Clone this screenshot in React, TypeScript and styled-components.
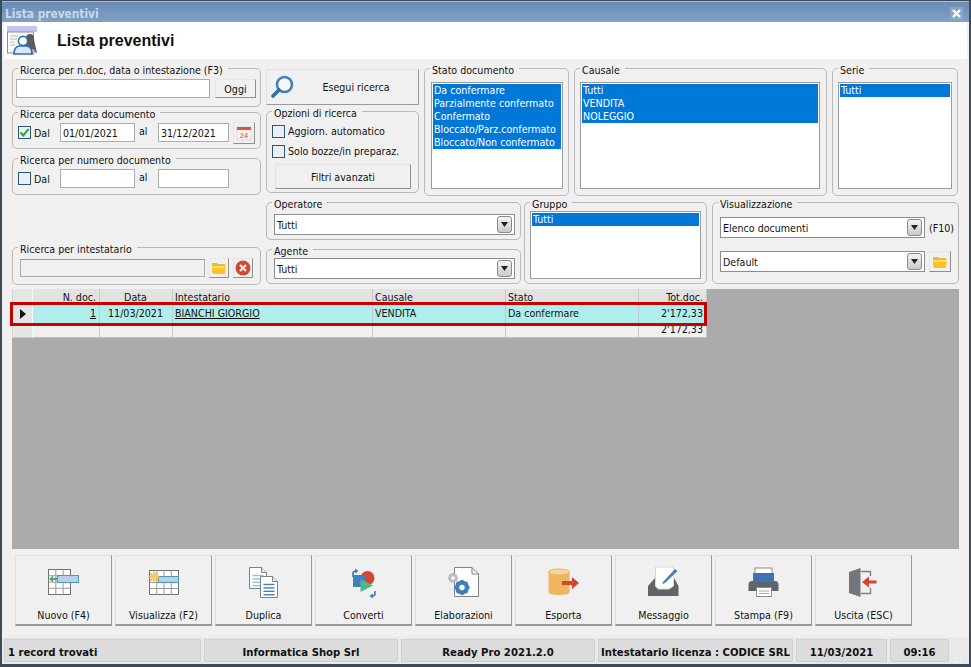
import { createGlobalStyle, styled } from 'styled-components';

const UI_FONT = '"DejaVu Sans Condensed", "DejaVu Sans", sans-serif';

const GlobalStyle = createGlobalStyle`
  html, body {
    margin: 0;
    padding: 0;
    background: #f0f0f0;
    overflow: hidden;
  }
  * {
    box-sizing: border-box;
  }
`;

const Win = styled.div`
  width: 971px;
  height: 667px;
  display: flex;
  flex-direction: column;
  background: #f0f0f0;
  border: 1px solid #3f4a58;
  border-width: 1px 2px 3px 2px;
  font-family: ${UI_FONT};
  font-stretch: condensed;
  font-size: 10.6px;
  line-height: 14px;
  color: #111;
`;

const TitleBar = styled.div`
  height: 21px;
  padding: 3px 3px 0 3px;
  flex: none;
  display: flex;
  align-items: center;
  justify-content: space-between;
  background: linear-gradient(#6a8cb5, #80a0c6);
  border-top: 1px solid #a9bdd6;
  color: #cdd8e6;
  font-weight: bold;
  font-size: 11.8px;
`;

const CloseBox = styled.div`
  width: 13px;
  height: 13px;
  margin-right: 3px;
  display: flex;
  align-items: center;
  justify-content: center;
  background: #8aa6c8;
`;

const Banner = styled.div`
  height: 37px;
  flex: none;
  margin: 0 2px 0 2px;
  padding-left: 3px;
  background: #fff;
  display: flex;
  align-items: center;
  gap: 20px;
`;

const BannerTitle = styled.div`
  font-family: "Liberation Sans", Arial, sans-serif;
  font-stretch: normal;
  font-weight: bold;
  font-size: 16px;
`;

const Form = styled.div`
  flex: none;
  height: 230px;
  padding: 9px 0 0 10px;
  display: flex;
  gap: 5px;
`;

const LeftColumn = styled.div`
  width: 249px;
  display: flex;
  flex-direction: column;
`;

const RightColumn = styled.div`
  display: flex;
  flex-direction: column;
  gap: 6px;
`;

const FilterRow = styled.div<{ $gap: number }>`
  display: flex;
  gap: ${p => p.$gap}px;
`;

const Stack = styled.div<{ $width: number; $gap: number }>`
  width: ${p => p.$width}px;
  display: flex;
  flex-direction: column;
  gap: ${p => p.$gap}px;
`;

const Group = styled.div<{ $w?: number; $h: number; $top?: number; $left?: number; $pad?: string; $col?: boolean; $gap?: number }>`
  position: relative;
  flex: none;
  width: ${p => (p.$w ? `${p.$w}px` : '100%')};
  height: ${p => p.$h}px;
  margin-top: ${p => p.$top ?? 0}px;
  margin-left: ${p => p.$left ?? 0}px;
  padding: ${p => p.$pad ?? '0'};
  border: 1px solid #b9b9b9;
  border-radius: 5px;
  display: flex;
  flex-direction: ${p => (p.$col ? 'column' : 'row')};
  align-items: ${p => (p.$col ? 'stretch' : 'center')};
  gap: ${p => p.$gap ?? 0}px;
`;

const Legend = styled.span`
  position: absolute;
  top: -6px;
  left: 5px;
  padding: 0 5px 0 2px;
  background: #f0f0f0;
  white-space: nowrap;
`;

const Field = styled.div<{ $w: number; $h?: number; $off?: boolean }>`
  width: ${p => p.$w}px;
  height: ${p => p.$h ?? 19}px;
  flex: none;
  padding: 0 2px;
  background: ${p => (p.$off ? '#f0f0f0' : '#fff')};
  border: 1px solid #acacac;
  border-top-color: ${p => (p.$off ? '#9a9a9a' : '#acacac')};
  line-height: 18px;
`;

const SmallButton = styled.div<{ $w: number; $h?: number; $left?: number }>`
  width: ${p => p.$w}px;
  height: ${p => p.$h ?? 19}px;
  margin-left: ${p => p.$left ?? 0}px;
  flex: none;
  display: flex;
  align-items: center;
  justify-content: center;
  background: #f0f0f0;
  border: 1px solid #e6e6e6;
  border-right-color: #8f8f8f;
  border-bottom-color: #8f8f8f;
`;

const Check = styled.div`
  width: 13px;
  height: 13px;
  flex: none;
  display: flex;
  align-items: center;
  justify-content: center;
  background: #eceff2;
  border: 1px solid #2c5878;
`;

const CheckLabel = styled.label<{ $w?: number }>`
  display: flex;
  align-items: center;
  gap: 3px;
  width: ${p => (p.$w ? `${p.$w}px` : 'auto')};
  flex: none;
  white-space: nowrap;
`;

const Between = styled.span<{ $w: number }>`
  width: ${p => p.$w}px;
  flex: none;
  padding-left: 4px;
  margin-top: -3px;
`;

const SearchButton = styled.div`
  height: 36px;
  width: 153px;
  margin-top: 1px;
  padding-left: 3px;
  display: flex;
  align-items: center;
  background: #f0f0f0;
  border: 1px solid #e2e2e2;
  border-right-color: #9a9a9a;
  border-bottom-color: #9a9a9a;
`;

const SearchCaption = styled.span`
  flex: 1;
  text-align: center;
`;

const WideButton = styled.div`
  height: 25px;
  margin: 0 1px 0 3px;
  display: flex;
  align-items: center;
  justify-content: center;
  border: 1px solid #e2e2e2;
  border-right-color: #8f8f8f;
  border-bottom-color: #8f8f8f;
`;

const ListBox = styled.div<{ $h: number }>`
  height: ${p => p.$h}px;
  width: 100%;
  padding: 1px;
  background: #fff;
  border: 1px solid #9c9c9c;
  overflow: hidden;
`;

const ListItem = styled.div`
  height: 13px;
  padding-left: 1px;
  line-height: 13px;
  background: #0078d7;
  color: #fff;
  white-space: nowrap;
`;

const Select = styled.div<{ $w: number }>`
  width: ${p => p.$w}px;
  height: 21px;
  flex: none;
  padding: 0 2px 0 2px;
  display: flex;
  align-items: center;
  justify-content: space-between;
  background: #fff;
  border: 1px solid #8d8d8d;
`;

const SelectArrow = styled.div`
  width: 15px;
  height: 17px;
  display: flex;
  align-items: center;
  justify-content: center;
  background: linear-gradient(#f4f4f4, #c9c9c9);
  border: 1px solid #8a8a8a;
  border-radius: 3px;
`;

const ViewRow = styled.div`
  display: flex;
  align-items: center;
  gap: 4px;
`;

const Grid = styled.div`
  position: relative;
  flex: none;
  height: 260px;
  margin: 0 10px;
  background: #ababab;
`;

const Table = styled.div`
  width: 694px;
  display: grid;
  grid-template-columns: 20px 67px 73px 200px 133px 133px 68px;
  background: #f0f0f0;
  border-left: 1px solid #d5d5d5;
`;

const Cell = styled.div<{ $kind: 'head' | 'sel' | 'sum'; $right?: boolean; $center?: boolean }>`
  height: ${p => (p.$kind === 'head' ? 15 : p.$kind === 'sel' ? 21 : 13)}px;
  padding: 0 3px 0 2px;
  text-align: ${p => (p.$right ? 'right' : p.$center ? 'center' : 'left')};
  line-height: ${p => (p.$kind === 'head' ? 16 : p.$kind === 'sel' ? 18 : 9)}px;
  white-space: nowrap;
  background: ${p => (p.$kind === 'head' ? '#e2e2e2' : p.$kind === 'sel' ? '#b0eeee' : '#f0f0f0')};
  border-right: 1px solid #c8c8c8;
  border-bottom: 1px solid ${p => (p.$kind === 'sum' ? '#c0c0c0' : 'transparent')};
`;

const RowHead = styled.div<{ $h: number }>`
  height: ${p => p.$h}px;
  display: flex;
  align-items: center;
  justify-content: center;
  background: #e6e6e6;
  border-right: 1px solid #fafafa;
  border-bottom: 1px solid #c8c8c8;
`;

const Linked = styled.span`
  text-decoration: underline;
`;

// red marker drawn over the selected row
const RowMark = styled.div`
  position: absolute;
  top: 13px;
  left: -2px;
  width: 697px;
  height: 24px;
  border: 3px solid #c80000;
  pointer-events: none;
`;

const Toolbar = styled.div`
  flex: none;
  margin-top: 6px;
  padding-left: 13px;
  display: flex;
  gap: 3px;
`;

const ToolButton = styled.div`
  width: 97px;
  height: 71px;
  padding-top: 10px;
  display: flex;
  flex-direction: column;
  align-items: center;
  justify-content: space-between;
  padding-bottom: 2px;
  background: #f0f0f0;
  border: 1px solid #e0e0e0;
  border-right-color: #9a9a9a;
  border-bottom: 2px solid #9a9a9a;
`;

const StatusBar = styled.div`
  flex: none;
  height: 27px;
  margin-top: auto;
  padding: 2px;
  display: flex;
  gap: 3px;
  background: #e9e9e9;
  font-family: "DejaVu Sans", sans-serif;
  font-stretch: normal;
  font-weight: bold;
  font-size: 10.1px;
`;

const StatusCell = styled.div<{ $w: number; $left?: boolean }>`
  width: ${p => p.$w}px;
  flex: none;
  padding: 4px 0 0 ${p => (p.$left ? 3 : 0)}px;
  display: flex;
  align-items: center;
  justify-content: ${p => (p.$left ? 'flex-start' : 'center')};
  background: #dcdcdc;
  border: 1px solid #d0d0d0;
  white-space: nowrap;
`;

const Grip = styled.svg`
  align-self: flex-end;
  margin-left: 2px;
`;

const FolderIcon = () => (
  <svg width="16" height="14" viewBox="0 0 16 14">
    <path d="M1 3 L1 2 L6 2 L7 3 L14 3 L14 5 L1 5Z" fill="#e8b93e" />
    <path d="M1 5 L15 4.5 L14 12 Q14 13 13 13 L3 13 Q1.5 13 1 11Z" fill="#fbc520" />
    <path d="M1.5 5.5 L14.5 5 L14.3 6.5 L1.5 7Z" fill="#fde58a" />
  </svg>
);

const ClearIcon = () => (
  <svg width="16" height="16" viewBox="0 0 16 16">
    <circle cx="8" cy="8" r="7.5" fill="#cf4a36" />
    <path d="M5 5 L11 11 M11 5 L5 11" stroke="#f6e3df" strokeWidth="2.2" />
  </svg>
);

const CalendarIcon = () => (
  <svg width="16" height="16" viewBox="0 0 16 16">
    <rect x="1" y="2" width="14" height="13" fill="#fdf3f1" stroke="#d8d8d8" />
    <path d="M1 2 H15 V5 H1Z" fill="#d9563f" />
    <text x="8" y="13" textAnchor="middle" fontSize="7.5" fontWeight="bold" fill="#e27a68" fontFamily="Liberation Sans, sans-serif">24</text>
  </svg>
);

const Tick = () => (
  <svg width="11" height="11" viewBox="0 0 11 11">
    <path d="M1.5 5.5 L4.3 8.5 L9.5 2" fill="none" stroke="#1ea52c" strokeWidth="2" />
  </svg>
);

const Arrow = () => (
  <svg width="7" height="5" viewBox="0 0 7 5">
    <path d="M0 0 H7 L3.5 5Z" fill="#222" />
  </svg>
);

const Lens = () => (
  <svg width="24" height="24" viewBox="0 0 24 24">
    <circle cx="14.5" cy="9.5" r="7.5" fill="#f4f9fd" stroke="#3f7fbd" strokeWidth="2.6" />
    <path d="M9 15 L3 21" stroke="#2f6fae" strokeWidth="3.6" strokeLinecap="round" />
  </svg>
);

const BannerIcon = () => (
  <svg width="30" height="30" viewBox="0 0 30 30">
    <rect x="0" y="0" width="30" height="6" fill="#c6c2f2" />
    <rect x="0.5" y="6" width="26" height="21" fill="#fafafa" stroke="#8c8c8c" />
    <path d="M3 10 H11 M3 13 H10 M3 16 H8 M3 19 H8" stroke="#b5b5b5" strokeWidth="1.2" />
    <circle cx="23" cy="12" r="4" fill="#5c5c5c" />
    <path d="M19 12 Q18 20 16 22 L30 27 L28 18 Q27 14 27 12Z" fill="#5c5c5c" />
    <circle cx="25" cy="26" r="3" fill="#b9b9b9" />
    <circle cx="16" cy="15" r="4.6" fill="#fff" stroke="#2f6fb3" strokeWidth="1.6" />
    <path d="M7 28 Q7 21 12 20 L20 20 Q25 21 25 28Z" fill="#d8e8f7" stroke="#2f6fb3" strokeWidth="1.6" />
  </svg>
);

const Sheet = ({ x, y, w = 22, h = 25, cols = 3 }: { x: number; y: number; w?: number; h?: number; cols?: number }) => {
  const lines = [];
  for (let i = 1; i < cols; i++) lines.push(<path key={i} d={`M${x + (w * i) / cols} ${y} V${y + h}`} stroke="#9a9a9a" />);
  for (let i = 1; i < 4; i++) lines.push(<path key={`r${i}`} d={`M${x} ${y + (h * i) / 4} H${x + w}`} stroke="#9a9a9a" />);
  return (
    <g>
      <rect x={x} y={y} width={w} height={h} fill="#fff" stroke="#707070" />
      {lines}
    </g>
  );
};

const Gear = ({ cx, cy, r, color }: { cx: number; cy: number; r: number; color: string }) => (
  <g>
    <circle cx={cx} cy={cy} r={r * 0.68} fill="none" stroke={color} strokeWidth={r * 0.5} />
    {[0, 45, 90, 135].map(a => (
      <rect
        key={a}
        x={cx - r * 0.2}
        y={cy - r}
        width={r * 0.4}
        height={r * 2}
        fill={color}
        transform={`rotate(${a} ${cx} ${cy})`}
      />
    ))}
    <circle cx={cx} cy={cy} r={r * 0.36} fill="#fff" />
  </g>
);

const Doc = ({ x, y, w, h, fold, lines }: { x: number; y: number; w: number; h: number; fold: number; lines: string }) => (
  <g>
    <path
      d={`M${x} ${y} H${x + w - fold} L${x + w} ${y + fold} V${y + h} H${x}Z`}
      fill="#fff"
      stroke="#808080"
    />
    <path d={`M${x + w - fold} ${y} V${y + fold} H${x + w}`} fill="#eee" stroke="#808080" />
    {[0, 1, 2, 3].map(i => (
      <path key={i} d={`M${x + 3} ${y + 8 + i * 3.4} H${x + w - 3}`} stroke={lines} strokeWidth="1.4" />
    ))}
  </g>
);

const icons: Record<string, React.ReactNode> = {
  nuovo: (
    <>
      <Sheet x={4.5} y={3.5} />
      <rect x={13.5} y={9.5} width={21} height={7} fill="#b9cfe8" stroke="#4d9ab5" />
      <path d="M5 13 L9 9.5 V12 H13 V14 H9 V16.5Z" fill="#4fa57e" />
    </>
  ),
  visualizza: (
    <>
      <Sheet x={5.5} y={4.5} w={29} h={24} cols={4} />
      <rect x={14.5} y={10.5} width={20} height={6} fill="#b9cfe8" stroke="#4d9ab5" />
      {[0, 45, 90, 135].map(a => (
        <rect key={a} x={9.2} y={5.5} width={1.6} height={11} fill="#f2b64a" transform={`rotate(${a} 10 11)`} />
      ))}
      <circle cx={10} cy={11} r={3} fill="#f6c86a" />
    </>
  ),
  duplica: (
    <>
      <Doc x={5.5} y={1.5} w={17} h={21} fold={5} lines="#8fc0e8" />
      <Doc x={16.5} y={10.5} w={17} h={21} fold={5} lines="#3f7fbd" />
    </>
  ),
  converti: (
    <>
      <circle cx={23.5} cy={12} r={7} fill="#d4472f" />
      <rect x={9} y={9} width={12.5} height={12} fill="#3f7fbd" />
      <path d="M16.5 13 L29 19.5 L16.5 26Z" fill="#4fb58c" />
      <path d="M9 11 V7 Q9 5 12 5" fill="none" stroke="#3f7fbd" strokeWidth="1.6" />
      <path d="M11 2.5 L14.5 5 L11 7.5Z" fill="#3f7fbd" />
      <path d="M31 25 V28 Q31 30 28 30" fill="none" stroke="#3f7fbd" strokeWidth="1.6" />
      <path d="M29 27.5 L25.5 30 L29 32.5Z" fill="#3f7fbd" />
    </>
  ),
  elaborazioni: (
    <>
      <path d="M10.5 1.5 H28 L34.5 8 V30.5 H10.5Z" fill="#fff" stroke="#808080" />
      <path d="M28 1.5 V8 H34.5" fill="none" stroke="#808080" />
      <Gear cx={9} cy={12} r={5} color="#bdbdbd" />
      <Gear cx={18} cy={21.5} r={7.5} color="#3f7fbd" />
    </>
  ),
  esporta: (
    <>
      <path d="M4.5 6 V26 Q4.5 29 15 29 Q25.5 29 25.5 26 V6Z" fill="#efb65f" />
      <ellipse cx={15} cy={6} rx={10.5} ry={3} fill="#f6d49c" stroke="#efb65f" />
      <path d="M18 15 H28 V11 L35 17 L28 23 V19 H18Z" fill="#d4472f" />
    </>
  ),
  messaggio: (
    <>
      <path d="M4 30 V20 L11 12 H30 L34.5 20 V30Z" fill="#5f6468" />
      <path d="M11.5 1 H29.5 V20 L25 23 H14 L11.5 20Z" fill="#fff" stroke="#d8d8d8" />
      <path d="M19 16 L31 3 L33.5 5 L21 17 L18 18Z" fill="#3f7fbd" />
    </>
  ),
  stampa: (
    <>
      <rect x={11} y={2} width={17} height={6} fill="#fff" stroke="#8c8c8c" />
      <path d="M4.5 19 Q4.5 15 8 15 H31 Q34.5 15 34.5 19 V25 H4.5Z" fill="#5f6468" />
      <rect x={9} y={7} width={21} height={9} fill="#3f74b3" />
      <rect x={12.5} y={21.5} width={15} height={9} fill="#fff" stroke="#8c8c8c" />
      <path d="M15 25 H25 M15 27.5 H25" stroke="#a8a8a8" />
    </>
  ),
  uscita: (
    <>
      <path d="M17 5.5 H26.5 V10 M26.5 22 V27.5 H17" fill="none" stroke="#808080" strokeWidth="1.4" />
      <path d="M5 6 L16.5 2 V31 L5 27Z" fill="#72777b" />
      <path d="M18 16 L25 10.5 V14.5 H32.5 V17.5 H25 V21.5Z" fill="#d4472f" />
    </>
  ),
};

const tools = [
  { id: 'nuovo', label: 'Nuovo (F4)' },
  { id: 'visualizza', label: 'Visualizza (F2)' },
  { id: 'duplica', label: 'Duplica' },
  { id: 'converti', label: 'Converti' },
  { id: 'elaborazioni', label: 'Elaborazioni' },
  { id: 'esporta', label: 'Esporta' },
  { id: 'messaggio', label: 'Messaggio' },
  { id: 'stampa', label: 'Stampa (F9)' },
  { id: 'uscita', label: 'Uscita (ESC)' },
];

const statusCells = [
  { text: '1 record trovati', w: 197, left: true },
  { text: 'Informatica Shop Srl', w: 194 },
  { text: 'Ready Pro 2021.2.0', w: 194 },
  { text: 'Intestatario licenza : CODICE SRL', w: 195 },
  { text: '11/03/2021', w: 91 },
  { text: '09:16', w: 59 },
];

const App = () => {
  return (
    <Win>
      <GlobalStyle />
      <TitleBar>
        Lista preventivi
        <CloseBox>
          <svg width="9" height="9" viewBox="0 0 9 9">
            <path d="M1 1 L8 8 M8 1 L1 8" stroke="#fff" strokeWidth="2.4" />
          </svg>
        </CloseBox>
      </TitleBar>
      <Banner>
        <BannerIcon />
        <BannerTitle>Lista preventivi</BannerTitle>
      </Banner>

      <Form>
        <LeftColumn>
          <Group $h={39} $pad="2px 5px 0 3px" $gap={5}>
            <Legend>Ricerca per n.doc, data o intestazione (F3)</Legend>
            <Field $w={194} />
            <SmallButton $w={41}>Oggi</SmallButton>
          </Group>
          <Group $h={37} $top={5} $pad="4px 5px 0 5px">
            <Legend>Ricerca per data documento</Legend>
            <CheckLabel $w={42}>
              <Check><Tick /></Check>
              Dal
            </CheckLabel>
            <Field $w={75}>01/01/2021</Field>
            <Between $w={23}>al</Between>
            <Field $w={71}>31/12/2021</Field>
            <SmallButton $w={22} $h={22} $left={4}><CalendarIcon /></SmallButton>
          </Group>
          <Group $h={37} $top={9} $pad="4px 5px 0 5px">
            <Legend>Ricerca per numero documento</Legend>
            <CheckLabel $w={42}>
              <Check />
              Dal
            </CheckLabel>
            <Field $w={75} />
            <Between $w={23}>al</Between>
            <Field $w={71} />
          </Group>
          <Group $h={38} $top={52} $pad="3px 5px 0 7px" $gap={4}>
            <Legend>Ricerca per intestatario</Legend>
            <Field $w={185} $h={18} $off />
            <SmallButton $w={20} $h={20}><FolderIcon /></SmallButton>
            <SmallButton $w={20} $h={20}><ClearIcon /></SmallButton>
          </Group>
        </LeftColumn>

        <RightColumn>
          <FilterRow $gap={5}>
            <Stack $width={153} $gap={6}>
              <SearchButton>
                <Lens />
                <SearchCaption>Esegui ricerca</SearchCaption>
              </SearchButton>
              <Group $h={82} $col $pad="12px 6px 0 5px" $gap={6}>
                <Legend>Opzioni di ricerca</Legend>
                <CheckLabel><Check />Aggiorn. automatico</CheckLabel>
                <CheckLabel><Check />Solo bozze/in preparaz.</CheckLabel>
                <WideButton>Filtri avanzati</WideButton>
              </Group>
            </Stack>
            <Group $w={145} $h={128} $col $pad="13px 5px 0 6px">
              <Legend>Stato documento</Legend>
              <ListBox $h={107}>
                <ListItem>Da confermare</ListItem>
                <ListItem>Parzialmente confermato</ListItem>
                <ListItem>Confermato</ListItem>
                <ListItem>Bloccato/Parz.confermato</ListItem>
                <ListItem>Bloccato/Non confermato</ListItem>
              </ListBox>
            </Group>
            <Group $w={253} $h={128} $col $pad="13px 6px 0 5px">
              <Legend>Causale</Legend>
              <ListBox $h={107}>
                <ListItem>Tutti</ListItem>
                <ListItem>VENDITA</ListItem>
                <ListItem>NOLEGGIO</ListItem>
              </ListBox>
            </Group>
            <Group $w={126} $h={128} $col $pad="13px 5px 0 5px">
              <Legend>Serie</Legend>
              <ListBox $h={107}>
                <ListItem>Tutti</ListItem>
              </ListBox>
            </Group>
          </FilterRow>

          <FilterRow $gap={3}>
            <Stack $width={255} $gap={9}>
              <Group $h={38} $pad="7px 5px 0 7px">
                <Legend>Operatore</Legend>
                <Select $w={241}>Tutti<SelectArrow><Arrow /></SelectArrow></Select>
              </Group>
              <Group $h={35} $pad="4px 5px 0 7px">
                <Legend>Agente</Legend>
                <Select $w={241}>Tutti<SelectArrow><Arrow /></SelectArrow></Select>
              </Group>
            </Stack>
            <Group $w={183} $h={82} $col $pad="8px 5px 0 5px">
              <Legend>Gruppo</Legend>
              <ListBox $h={68}>
                <ListItem>Tutti</ListItem>
              </ListBox>
            </Group>
            <Group $w={247} $h={82} $left={2} $col $pad="14px 0 0 7px" $gap={13}>
              <Legend>Visualizzazione</Legend>
              <ViewRow>
                <Select $w={205}>Elenco documenti<SelectArrow><Arrow /></SelectArrow></Select>
                (F10)
              </ViewRow>
              <ViewRow>
                <Select $w={205}>Default<SelectArrow><Arrow /></SelectArrow></Select>
                <SmallButton $w={22} $h={21}><FolderIcon /></SmallButton>
              </ViewRow>
            </Group>
          </FilterRow>
        </RightColumn>
      </Form>

      <Grid>
        <Table>
          <RowHead $h={15} />
          <Cell $kind="head" $right>N. doc.</Cell>
          <Cell $kind="head" $center>Data</Cell>
          <Cell $kind="head">Intestatario</Cell>
          <Cell $kind="head">Causale</Cell>
          <Cell $kind="head">Stato</Cell>
          <Cell $kind="head" $right>Tot.doc.</Cell>

          <RowHead $h={21}>
            <svg width="6" height="10" viewBox="0 0 6 10">
              <path d="M0 0 L6 5 L0 10Z" fill="#111" />
            </svg>
          </RowHead>
          <Cell $kind="sel" $right><Linked>1</Linked></Cell>
          <Cell $kind="sel" $center>11/03/2021</Cell>
          <Cell $kind="sel"><Linked>BIANCHI GIORGIO</Linked></Cell>
          <Cell $kind="sel">VENDITA</Cell>
          <Cell $kind="sel">Da confermare</Cell>
          <Cell $kind="sel" $right>2'172,33</Cell>

          <RowHead $h={13} />
          <Cell $kind="sum" />
          <Cell $kind="sum" />
          <Cell $kind="sum" />
          <Cell $kind="sum" />
          <Cell $kind="sum" />
          <Cell $kind="sum" $right>2'172,33</Cell>
        </Table>
        <RowMark />
      </Grid>

      <Toolbar>
        {tools.map(t => (
          <ToolButton key={t.id}>
            <svg width="40" height="32" viewBox="0 0 40 32">{icons[t.id]}</svg>
            {t.label}
          </ToolButton>
        ))}
      </Toolbar>

      <StatusBar>
        {statusCells.map(c => (
          <StatusCell key={c.text} $w={c.w} $left={c.left}>{c.text}</StatusCell>
        ))}
        <Grip width="8" height="8" viewBox="0 0 8 8">
          <path d="M6 1 H7 V2 H6Z M3 4 H4 V5 H3Z M6 4 H7 V5 H6Z M0 7 H1 V8 H0Z M3 7 H4 V8 H3Z M6 7 H7 V8 H6Z" fill="#fff" />
        </Grip>
      </StatusBar>
    </Win>
  );
};

export default App;
